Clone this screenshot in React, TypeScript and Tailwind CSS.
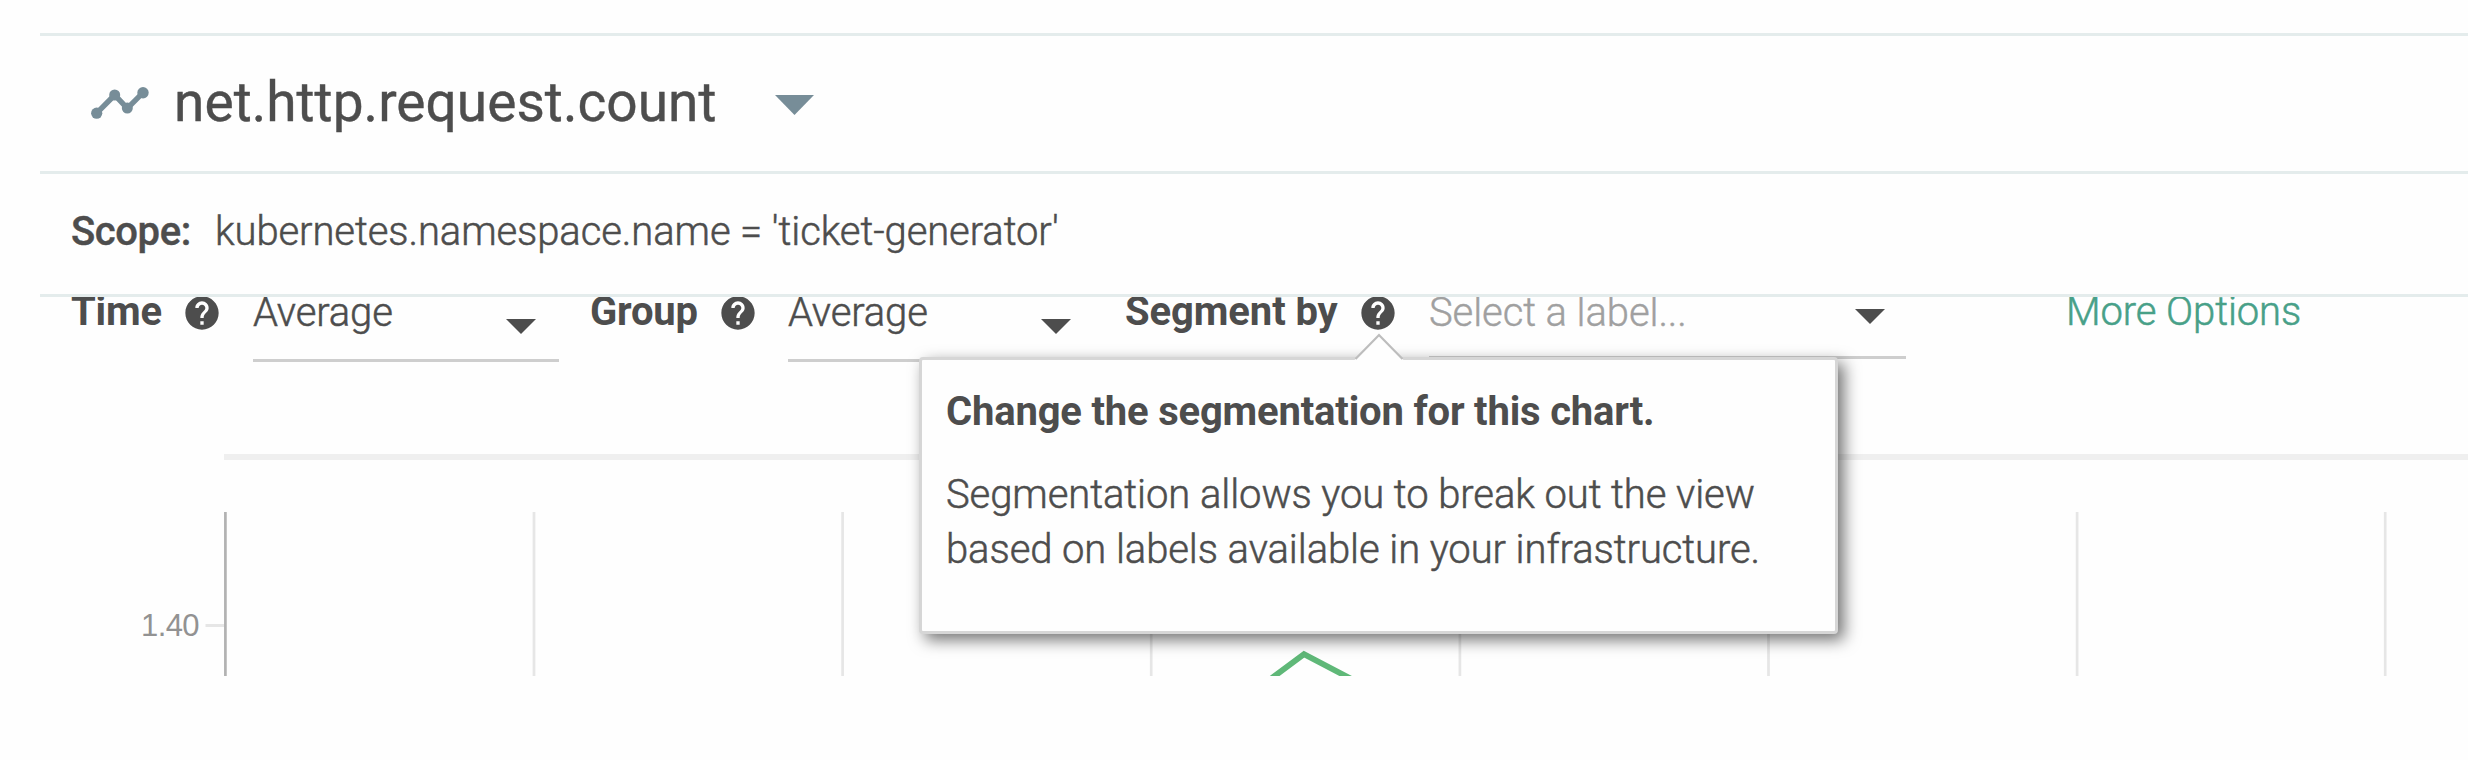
import React from "react";

const GRID_X = [310.1, 618.7, 927.3, 1236, 1544.6, 1853.2, 2161.3];

function MetricIcon() {
  return (
    <svg className="h-[34px] w-[58px] shrink-0" viewBox="0 0 58 34" fill="#778d98">
      <path d="M5.700 26.200L23.700 8l12.600 13.400L52 5.700" fill="none" stroke="#778d98" strokeWidth="5.400" />
      <circle cx="5.700" cy="26.200" r="5.600" />
      <circle cx="23.700" cy="8" r="5.500" />
      <circle cx="36.300" cy="21" r="5.500" />
      <circle cx="52" cy="5.800" r="5.700" />
    </svg>
  );
}

function HelpIcon() {
  return (
    <svg className="block size-[40px]" viewBox="0 0 24 24" fill="#4d4d4d">
      <path d="M12 2C6.48 2 2 6.48 2 12s4.48 10 10 10 10-4.48 10-10S17.52 2 12 2zm1 17h-2v-2h2v2zm2.07-7.75l-.9.92C13.45 12.9 13 13.5 13 15h-2v-.5c0-1.1.45-2.1 1.17-2.83l1.24-1.26c.37-.36.59-.86.59-1.41 0-1.1-.9-2-2-2s-2 .9-2 2H8c0-2.21 1.79-4 4-4s4 1.790 4 4c0 .88-.36 1.680-.93 2.250z" />
    </svg>
  );
}

function Caret() {
  return (
    <svg className="block h-[15px] w-[30px]" viewBox="0 0 30 15" fill="#4d4d4d">
      <path d="M0 0h30L15 15z" />
    </svg>
  );
}

function AverageSelect() {
  return (
    <div className="flex h-[65px] w-[306px] items-start justify-between border-b-[3px] border-[#cecece] pr-[23px]">
      <span className="-mt-[4px] font-light leading-[40px] tracking-[-0.15px] [-webkit-text-stroke:0.5px_#4d4d4d]">
        Average
      </span>
      <div className="pt-[22px]">
        <Caret />
      </div>
    </div>
  );
}

function SegmentTooltip() {
  return (
    <div
      role="tooltip"
      className="absolute left-[-439px] top-[64px] z-20 h-[277px] w-[919px] rounded-[4px] border-[3px] border-[#d6d6d6] bg-[#fefefe] pl-[24px] pt-[24px] leading-[55px] shadow-[6px_6px_16px_rgba(0,0,0,0.55)]"
    >
      <svg className="absolute left-[430px] top-[-28px] h-[29px] w-[54px]" viewBox="0 0 54 29">
        <path d="M1.500 29L27 3l25.500 26z" fill="#fefefe" />
        <path d="M3.500 27L27 3l23.500 24" fill="none" stroke="#bdbdbd" strokeWidth="2.200" />
      </svg>
      <p className="font-bold tracking-[-0.19px]">Change the segmentation for this chart.</p>
      <p className="mt-[28px] font-light tracking-[-0.09px] [-webkit-text-stroke:0.5px_#4d4d4d]">
        Segmentation allows you to break out the view
        <br />
        based on labels available in your infrastructure.
      </p>
    </div>
  );
}

export default function App() {
  return (
    <div className="h-[760px] w-[2468px] overflow-hidden bg-[#fefefe] pl-[40px] pt-[33px] font-['Roboto',sans-serif] text-[40px] text-[#4d4d4d]">
      <header className="flex h-[138px] items-center border-t-[3px] border-[#e4ecec] pl-[51px]">
        <MetricIcon />
        <h1 className="-mt-[3px] ml-[25px] text-[55px] leading-[64px] tracking-[0.05px] [-webkit-text-stroke:0.4px_#4d4d4d]">
          net.http.request.count
        </h1>
        <svg className="ml-[58px] mt-[3px] h-[20px] w-[39px]" viewBox="0 0 39 20" fill="#778d98">
          <path d="M0 0h39L19.500 20z" />
        </svg>
      </header>

      <div className="relative z-10 flex h-[126px] items-center border-y-[3px] border-[#e4ecec] pl-[31px]">
        <span className="-mt-[5px] w-[144px] font-medium tracking-[-0.4px] [-webkit-text-stroke:0.4px_#4d4d4d]">
          Scope:
        </span>
        <span className="-mt-[5px] font-light tracking-[-0.1px] [-webkit-text-stroke:0.5px_#4d4d4d]">
          kubernetes.namespace.name = 'ticket-generator'
        </span>
      </div>

      <div className="flex h-[157px] items-start pl-[31px]">
        <span className="-mt-[5px] w-[111px] font-bold leading-[40px] tracking-[-0.2px]">Time</span>
        <div className="-mt-[4px] mr-[31px]">
          <HelpIcon />
        </div>
        <AverageSelect />

        <span className="-mt-[5px] ml-[31px] w-[128px] font-bold leading-[40px] tracking-[-0.2px]">Group</span>
        <div className="-mt-[4px] mr-[30px]">
          <HelpIcon />
        </div>
        <AverageSelect />

        <span className="-mt-[5px] ml-[31px] w-[233px] whitespace-nowrap font-bold leading-[40px] tracking-[-0.1px]">
          Segment by
        </span>
        <div className="relative -mt-[4px] mr-[31px]">
          <HelpIcon />
          <SegmentTooltip />
        </div>
        <div className="flex h-[62px] w-[477px] items-start justify-between border-b-[3px] border-[#cecece] pr-[21px]">
          <span className="-mt-[4px] font-light leading-[40px] tracking-[-0.1px] text-[#a0a0a0] [-webkit-text-stroke:0.4px_#a0a0a0]">
            Select a label...
          </span>
          <div className="pt-[12px]">
            <Caret />
          </div>
        </div>

        <a className="-mt-[5px] ml-[160px] font-light leading-[40px] tracking-[-0.1px] text-[#48a088] [-webkit-text-stroke:0.5px_#48a088]">
          More Options
        </a>
      </div>

      <div className="ml-[184px] h-[6px] bg-[#efefef]" />

      <div className="mt-[52px] flex h-[164px]">
        <div className="flex w-[159px] justify-end pt-[96px] font-['Liberation_Sans',sans-serif] text-[31px] leading-[36px] tracking-[-0.6px] text-[#929292]">
          1.40
        </div>
        <svg className="ml-[6px] h-[164px] w-[2263px] shrink-0" viewBox="0 0 2263 164">
          <g transform="translate(18.900 0)">
            <path d="M-18.400 113.500H1" stroke="#e6e6e6" strokeWidth="3" />
            {GRID_X.map((x) => (
              <path key={x} d={`M${x} 0V164`} stroke="#e6e6e6" strokeWidth="2.700" />
            ))}
            <path d="M1.500 0V164" stroke="#b2b2b2" strokeWidth="2.700" />
            <path d="M1040 172L1080.100 142.200L1138 172.500" fill="none" stroke="#5fb878" strokeWidth="5.800" />
          </g>
        </svg>
      </div>
    </div>
  );
}
